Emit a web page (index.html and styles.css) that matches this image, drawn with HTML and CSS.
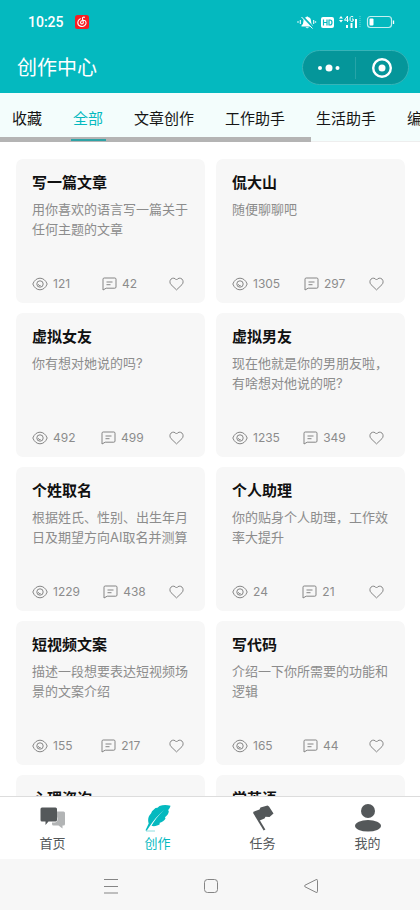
FILE: index.html
```html
<!DOCTYPE html>
<html lang="zh-CN">
<head>
<meta charset="utf-8">
<meta name="viewport" content="width=device-width, initial-scale=1">
<title>创作中心</title>
<link rel="stylesheet" href="styles.css">
</head>
<body>
<svg class="defs" aria-hidden="true">
  <symbol id="eye" viewBox="0 0 16 14"><path d="M.8 7C2.300 3.200 5 1.200 8 1.200S13.700 3.200 15.200 7C13.700 10.800 11 12.800 8 12.800S2.300 10.800.8 7Z"/><circle cx="8" cy="7" r="3.200"/><path d="M6.300 7.200A1.800 1.800 0 0 0 8.600 8.600"/></symbol>
  <symbol id="comment" viewBox="0 0 15 14"><path d="M1 13V2.200Q1 1 2.200 1H12.800Q14 1 14 2.200V10Q14 11.200 12.800 11.200H4.200L1 13ZM4.500 5H10.500M4.500 7.700H8.500"/></symbol>
  <symbol id="heart" viewBox="0 0 15 14"><path d="M7.500 12.900L2 7.600C.5 6 .6 3.500 2 2.100 3.600.6 6.100.9 7.500 3 8.900.9 11.400.6 13 2.100 14.400 3.500 14.500 6 13 7.600Z"/></symbol>
</svg>
<header class="header">
  <div class="status">
    <span class="time">10:25</span>
    <svg class="music" viewBox="0 0 14 14"><rect width="14" height="14" rx="2.500" fill="#f91b22"/><path d="M9.500 2.300C8.300 1.700 7.200 2.600 7.500 3.800L8.300 7.200C8.500 8.300 7.800 8.900 7 8.900 4.900 8.900 5 5.500 8 5.200 11.400 5 12 8.500 9.700 10.500 7.200 12.500 2.700 11.200 2.800 7.400 2.900 5.500 3.900 4.400 5.300 3.700" fill="none" stroke="#fff" stroke-width="1.100" stroke-linecap="round"/></svg>
    <svg class="signals" viewBox="0 0 98 16">
      <g fill="#fff"><path d="M4.500 11.500Q6.500 10 6.500 7Q6.500 3.500 9.500 3Q10 1.500 11 3Q14 3.500 14 7Q14 10 16 11.500V12.500H4.500ZM8.500 13.200H12Q10.200 15.500 8.500 13.200Z"/><circle cx="1" cy="8" r=".8"/><circle cx="18.500" cy="8" r=".8"/><path d="M2.800 6h1v4h-1zM16.200 6h1v4h-1z"/></g>
      <path d="M5 2L16.500 14" stroke="#04b9bf" stroke-width="2"/><path d="M4.500 3L15.500 14.500" stroke="#fff" stroke-width="1"/>
      <rect x="24" y="3" width="13" height="11" rx="2" fill="#fff"/><path d="M26.500 5.500V11.500M30 5.500V11.500M26.500 8.500H30M32 6V11H33Q35 11 35 8.500T33 6Z" fill="none" stroke="#04b9bf" stroke-width="1.200"/>
      <path d="M42 4.500L44 2L46 4.500ZM42 6L44 8.500L46 6ZM49 11h2v3h-2zM53.500 9h2v5h-2zM58 5h2v9h-2z" fill="#fff"/><path d="M50.500 8V2L47.500 6.200H51.500M56.200 2.800Q53 1.500 53 5T56.200 7V5H55" fill="none" stroke="#fff"/><path d="M63 2V14" stroke="#6ed5d8" stroke-dasharray="1 1"/>
      <rect x="70.500" y="2.500" width="24" height="11" rx="3" fill="none" stroke="#c5eff0" stroke-width="1.200"/><rect x="72.500" y="4.500" width="4" height="7" rx="1" fill="#fff"/><path d="M96.500 6.500V10" stroke="#fff" stroke-width="1.300"/>
    </svg>
  </div>
  <div class="titlebar">
    <h1>创作中心</h1>
    <div class="capsule">
      <button type="button" aria-label="更多"><svg width="22" height="8" viewBox="0 0 22 8" fill="#fff"><circle cx="2" cy="4" r="2"/><circle cx="11" cy="4" r="3.500"/><circle cx="19.500" cy="4" r="2"/></svg></button>
      <button type="button" aria-label="关闭"><svg width="20" height="20" viewBox="0 0 20 20"><circle cx="10" cy="10" r="8.800" fill="none" stroke="#fff" stroke-width="2.400"/><circle cx="10" cy="10" r="3.500" fill="#fff"/></svg></button>
    </div>
  </div>
</header>
<nav class="tabs" aria-label="分类">
  <div class="tablist">
    <button type="button">收藏</button><button type="button" class="active">全部</button><button type="button">文章创作</button><button type="button">工作助手</button><button type="button">生活助手</button><button type="button">编</button>
  </div>
  <div class="scrollbar"></div>
</nav>
<main class="content">
  <div class="cards">
    <article class="card"><h2>写一篇文章</h2><p>用你喜欢的语言写一篇关于任何主题的文章</p><div class="stats"><span><svg class="eye"><use href="#eye"/></svg>121</span><span><svg><use href="#comment"/></svg>42</span><button type="button" aria-label="收藏"><svg><use href="#heart"/></svg></button></div></article>
    <article class="card"><h2>侃大山</h2><p>随便聊聊吧</p><div class="stats"><span><svg class="eye"><use href="#eye"/></svg>1305</span><span><svg><use href="#comment"/></svg>297</span><button type="button" aria-label="收藏"><svg><use href="#heart"/></svg></button></div></article>
    <article class="card"><h2>虚拟女友</h2><p>你有想对她说的吗?</p><div class="stats"><span><svg class="eye"><use href="#eye"/></svg>492</span><span><svg><use href="#comment"/></svg>499</span><button type="button" aria-label="收藏"><svg><use href="#heart"/></svg></button></div></article>
    <article class="card"><h2>虚拟男友</h2><p>现在他就是你的男朋友啦，有啥想对他说的呢?</p><div class="stats"><span><svg class="eye"><use href="#eye"/></svg>1235</span><span><svg><use href="#comment"/></svg>349</span><button type="button" aria-label="收藏"><svg><use href="#heart"/></svg></button></div></article>
    <article class="card"><h2>个姓取名</h2><p>根据姓氏、性别、出生年月日及期望方向AI取名并测算</p><div class="stats"><span><svg class="eye"><use href="#eye"/></svg>1229</span><span><svg><use href="#comment"/></svg>438</span><button type="button" aria-label="收藏"><svg><use href="#heart"/></svg></button></div></article>
    <article class="card"><h2>个人助理</h2><p>你的贴身个人助理，工作效率大提升</p><div class="stats"><span><svg class="eye"><use href="#eye"/></svg>24</span><span><svg><use href="#comment"/></svg>21</span><button type="button" aria-label="收藏"><svg><use href="#heart"/></svg></button></div></article>
    <article class="card"><h2>短视频文案</h2><p>描述一段想要表达短视频场景的文案介绍</p><div class="stats"><span><svg class="eye"><use href="#eye"/></svg>155</span><span><svg><use href="#comment"/></svg>217</span><button type="button" aria-label="收藏"><svg><use href="#heart"/></svg></button></div></article>
    <article class="card"><h2>写代码</h2><p>介绍一下你所需要的功能和逻辑</p><div class="stats"><span><svg class="eye"><use href="#eye"/></svg>165</span><span><svg><use href="#comment"/></svg>44</span><button type="button" aria-label="收藏"><svg><use href="#heart"/></svg></button></div></article>
    <article class="card"><h2>心理咨询</h2></article>
    <article class="card"><h2>学英语</h2></article>
  </div>
</main>
<nav class="tabbar" aria-label="主导航">
  <a href="#home"><svg viewBox="0 0 28 28"><path d="M17 7.500H24.500Q26 7.500 26 9V20Q26 21.500 24.500 21.500H23.500V24.500L19.500 21.500H14.500Q13 21.500 13 20V18.500H15.500Q18.500 18.500 18.500 15Z" fill="#b2b4b5"/><path d="M3 3.500H16.500Q18 3.500 18 5V16Q18 17.500 16.500 17.500H9.500L6.500 21V17.500H3Q1.500 17.500 1.500 16V5Q1.500 3.500 3 3.500Z" fill="#54585a"/></svg>首页</a>
  <a href="#create" class="active"><svg viewBox="0 0 28 28"><path d="M26.500 1.800C23 .8 19 .8 15.500 2L13.500 3.800 11.500 4 8 7.200 7 9.500C4.500 12 3.500 15 4.700 19.500L1.500 26.200 2.500 27 6.200 21.500C9 17 14 11 20 6 14 12 10 17 7.500 21.800 10 22.700 13.500 22 16 20L15.300 19C18 18.500 20.500 16.500 21.500 14.500L21 13.200C23.500 11.500 24.500 9.500 24.800 7.500L24.200 6C25.500 5 26 3.500 26.500 1.800Z" fill="#04b9bf"/><path d="M2 27H11" stroke="#8edddf"/></svg>创作</a>
  <a href="#tasks"><svg viewBox="0 0 28 28"><path d="M4 8L10.500 5.500 11.500 3.500 18.500 1.500 20 2.500 24.500 9.500 20.500 13 16.500 12.800 15.500 14.500 10 16.800Z" fill="#54585a"/><path d="M5 8.500L15.500 26" stroke="#54585a" stroke-width="2"/></svg>任务</a>
  <a href="#mine"><svg viewBox="0 0 28 28" fill="#54585a"><circle cx="14" cy="7" r="7"/><ellipse cx="14" cy="21.800" rx="13" ry="5.800"/></svg>我的</a>
</nav>
<footer class="system">
  <button type="button" aria-label="最近任务"><svg viewBox="0 0 16 16"><path d="M1 1.500H15M1 8.500H15M1 15H15"/></svg></button>
  <button type="button" aria-label="主屏幕"><svg viewBox="0 0 16 16"><rect x="1.500" y="1.500" width="13" height="13" rx="3"/></svg></button>
  <button type="button" aria-label="返回"><svg viewBox="0 0 16 16"><path d="M2 7.200L13 1.700Q14.500 1 14.500 2.500V13.500Q14.500 15 13 14.300L2 8.800Q.8 8 2 7.200Z"/></svg></button>
</footer>
</body>
</html>
```

FILE: styles.css
```css
* { box-sizing: border-box; }
body {
  margin: 0;
  height: 100vh;
  display: flex;
  flex-direction: column;
  background: #fff;
  color: #151515;
  font-family: Inter, "Noto Sans CJK SC", sans-serif;
}
button {
  margin: 0;
  padding: 0;
  border: 0;
  background: none;
  font: inherit;
  color: inherit;
}
svg { display: block; flex: none; }
.defs { width: 0; height: 0; position: absolute; }
.header { flex: none; background: #04b9bf; color: #fff; }
.status {
  display: flex;
  align-items: center;
  height: 43px;
  padding: 0 25px 0 28px;
}
.time {
  font: 500 14px/20px Roboto, sans-serif;
}
.music { width: 14px; height: 14px; margin-left: 11px; }
.signals { width: 98px; height: 16px; margin-left: auto; }
.titlebar {
  display: flex;
  align-items: center;
  justify-content: space-between;
  height: 50px;
  padding: 0 11px 1px 17px;
}
h1 { margin: 0; font-size: 20px; font-weight: 400; line-height: 28px; }
.capsule {
  display: flex;
  align-items: center;
  width: 107px;
  height: 35px;
  border: 1px solid #37b4b8;
  border-radius: 18px;
  background: #05969a;
}
.capsule button {
  flex: 1;
  height: 22px;
  display: flex;
  align-items: center;
  justify-content: center;
}
.capsule button + button { border-left: 1px solid #27a4a8; }
.tabs {
  flex: none;
  position: relative;
  height: 49px;
  overflow: hidden;
  background: #f3fdfc;
  box-shadow: inset 0 -1px #eee;
}
.tablist {
  display: flex;
  gap: 31px;
  padding-left: 12px;
  height: 49px;
}
.tablist button {
  flex: none;
  position: relative;
  z-index: 1;
  font-size: 15px;
  line-height: 52px;
  white-space: nowrap;
}
.tablist .active { color: #04b9bf; }
.tablist .active::after {
  content: "";
  position: absolute;
  left: -2px;
  right: -3px;
  bottom: 1px;
  height: 2px;
  background: #2ea3a6;
}
.scrollbar {
  position: absolute;
  left: 0;
  bottom: 0;
  width: 74%;
  height: 5px;
  background: #b4b4b4;
}
.content { flex: 1; min-height: 0; overflow: hidden; padding: 17px 15px 0 16px; }
.cards {
  display: grid;
  grid-template-columns: 1fr 1fr;
  gap: 10px 11px;
}
.card {
  display: flex;
  flex-direction: column;
  min-width: 0;
  min-height: 144px;
  padding: 12px 16px 10px;
  border-radius: 7px;
  background: #f7f7f7;
}
h2 { margin: 0 0 5px; font-size: 15px; font-weight: 700; line-height: 23px; color: #111; }
.card p { margin: 0; font-size: 13px; line-height: 20px; color: #8c8c8c; }
.stats {
  display: flex;
  align-items: center;
  justify-content: space-between;
  margin-top: auto;
  padding-right: 5px;
  font-size: 12px;
  line-height: 18px;
  color: #8c8c8c;
}
.stats span { display: flex; align-items: center; gap: 5px; }
.stats svg { width: 15px; height: 14px; fill: none; stroke: #858585; stroke-width: 1; stroke-linejoin: round; }
.stats .eye { width: 16px; }
.tabbar {
  flex: none;
  display: flex;
  height: 63px;
  border-top: 1px solid #ddd;
  background: #fff;
}
.tabbar a {
  flex: 1;
  display: flex;
  flex-direction: column;
  align-items: center;
  padding-top: 7px;
  gap: 1px;
  font-size: 13px;
  line-height: 20px;
  color: #54585a;
  text-decoration: none;
}
.tabbar svg { width: 28px; height: 28px; }
.tabbar .active { color: #04b9bf; }
.system {
  flex: none;
  display: flex;
  align-items: center;
  justify-content: center;
  gap: 84px;
  height: 51px;
  padding: 2px 0 0 2px;
  background: #f7f7f7;
}
.system svg { width: 16px; height: 16px; fill: none; stroke: #858585; stroke-width: 1; }
```
